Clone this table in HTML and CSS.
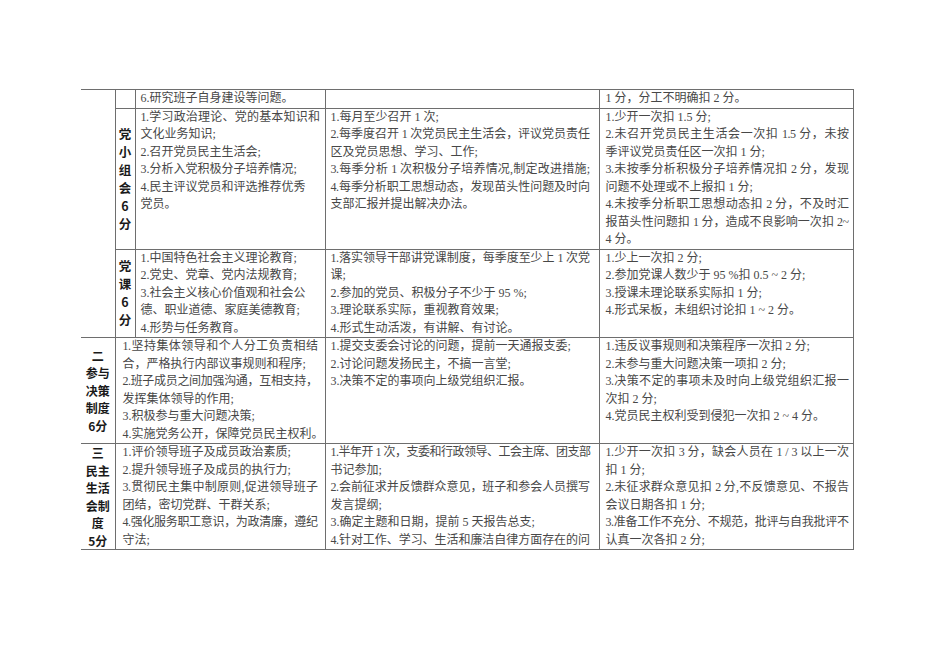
FILE: index.html
```html
<!DOCTYPE html>
<html lang="zh-CN">
<head>
<meta charset="utf-8">
<title>考核表</title>
<link rel="stylesheet" href="styles.css">
</head>
<body>
<table class="tbl">
  <colgroup>
    <col class="w1"><col class="w2"><col class="w3"><col class="w4"><col class="w5">
  </colgroup>
  <tr>
    <td class="cat" rowspan="3"></td>
    <td class="sub"></td>
    <td class="p3"><div class="ln">6.研究班子自身建设等问题。</div></td>
    <td class="p4"></td>
    <td class="p5"><div class="ln">1 分，分工不明确扣 2 分。</div></td>
  </tr>
  <tr>
    <td class="sub"><div>党</div><div>小</div><div>组</div><div>会</div><div>6</div><div>分</div></td>
    <td class="p3">
      <div class="ln f">1.学习政治理论、党的基本知识和</div>
      <div class="ln">文化业务知识;</div>
      <div class="ln">2.召开党员民主生活会;</div>
      <div class="ln">3.分析入党积极分子培养情况;</div>
      <div class="ln">4.民主评议党员和评选推荐优秀</div>
      <div class="ln">党员。</div>
    </td>
    <td class="p4">
      <div class="ln">1.每月至少召开 1 次;</div>
      <div class="ln f">2.每季度召开 1 次党员民主生活会，评议党员责任</div>
      <div class="ln">区及党员思想、学习、工作;</div>
      <div class="ln f">3.每季分析 1 次积极分子培养情况,制定改进措施;</div>
      <div class="ln f">4.每季分析职工思想动态，发现苗头性问题及时向</div>
      <div class="ln">支部汇报并提出解决办法。</div>
    </td>
    <td class="p5">
      <div class="ln">1.少开一次扣 1.5 分;</div>
      <div class="ln f">2.未召开党员民主生活会一次扣 1.5 分，未按</div>
      <div class="ln">季评议党员责任区一次扣 1 分;</div>
      <div class="ln f">3.未按季分析积极分子培养情况扣 2 分，发现</div>
      <div class="ln">问题不处理或不上报扣 1 分;</div>
      <div class="ln f">4.未按季分析职工思想动态扣 2 分，不及时汇</div>
      <div class="ln f">报苗头性问题扣 1 分，造成不良影响一次扣 2~</div>
      <div class="ln">4 分。</div>
    </td>
  </tr>
  <tr>
    <td class="sub"><div>党</div><div>课</div><div>6</div><div>分</div></td>
    <td class="p3">
      <div class="ln">1.中国特色社会主义理论教育;</div>
      <div class="ln">2.党史、党章、党内法规教育;</div>
      <div class="ln">3.社会主义核心价值观和社会公</div>
      <div class="ln">德、职业道德、家庭美德教育;</div>
      <div class="ln">4.形势与任务教育。</div>
    </td>
    <td class="p4">
      <div class="ln f">1.落实领导干部讲党课制度，每季度至少上 1 次党</div>
      <div class="ln">课;</div>
      <div class="ln">2.参加的党员、积极分子不少于 95 %;</div>
      <div class="ln">3.理论联系实际，重视教育效果;</div>
      <div class="ln">4.形式生动活泼，有讲解、有讨论。</div>
    </td>
    <td class="p5">
      <div class="ln">1.少上一次扣 2 分;</div>
      <div class="ln">2.参加党课人数少于 95 %扣 0.5 ~ 2 分;</div>
      <div class="ln">3.授课未理论联系实际扣 1 分;</div>
      <div class="ln">4.形式呆板，未组织讨论扣 1 ~ 2 分。</div>
    </td>
  </tr>
  <tr>
    <td class="cat"><div>二</div><div>参与</div><div>决策</div><div>制度</div><div>6分</div></td>
    <td class="pm" colspan="2">
      <div class="ln f">1.坚持集体领导和个人分工负责相结</div>
      <div class="ln">合，严格执行内部议事规则和程序;</div>
      <div class="ln f">2.班子成员之间加强沟通，互相支持，</div>
      <div class="ln">发挥集体领导的作用;</div>
      <div class="ln">3.积极参与重大问题决策;</div>
      <div class="ln">4.实施党务公开，保障党员民主权利。</div>
    </td>
    <td class="p4">
      <div class="ln">1.提交支委会讨论的问题，提前一天通报支委;</div>
      <div class="ln">2.讨论问题发扬民主，不搞一言堂;</div>
      <div class="ln">3.决策不定的事项向上级党组织汇报。</div>
    </td>
    <td class="p5">
      <div class="ln">1.违反议事规则和决策程序一次扣 2 分;</div>
      <div class="ln">2.未参与重大问题决策一项扣 2 分;</div>
      <div class="ln f">3.决策不定的事项未及时向上级党组织汇报一</div>
      <div class="ln">次扣 2 分;</div>
      <div class="ln">4.党员民主权利受到侵犯一次扣 2 ~ 4 分。</div>
    </td>
  </tr>
  <tr>
    <td class="cat"><div>三</div><div>民主</div><div>生活</div><div>会制</div><div>度</div><div>5分</div></td>
    <td class="pm" colspan="2">
      <div class="ln">1.评价领导班子及成员政治素质;</div>
      <div class="ln">2.提升领导班子及成员的执行力;</div>
      <div class="ln f">3.贯彻民主集中制原则,促进领导班子</div>
      <div class="ln">团结，密切党群、干群关系;</div>
      <div class="ln f">4.强化服务职工意识，为政清廉，遵纪</div>
      <div class="ln">守法;</div>
    </td>
    <td class="p4">
      <div class="ln f">1.半年开 1 次，支委和行政领导、工会主席、团支部</div>
      <div class="ln">书记参加;</div>
      <div class="ln f">2.会前征求并反馈群众意见，班子和参会人员撰写</div>
      <div class="ln">发言提纲;</div>
      <div class="ln">3.确定主题和日期，提前 5 天报告总支;</div>
      <div class="ln f">4.针对工作、学习、生活和廉洁自律方面存在的问</div>
    </td>
    <td class="p5">
      <div class="ln f">1.少开一次扣 3 分，缺会人员在 1 / 3 以上一次</div>
      <div class="ln">扣 1 分;</div>
      <div class="ln f">2.未征求群众意见扣 2 分,不反馈意见、不报告</div>
      <div class="ln">会议日期各扣 1 分;</div>
      <div class="ln f">3.准备工作不充分、不规范，批评与自我批评不</div>
      <div class="ln">认真一次各扣 2 分;</div>
    </td>
  </tr>
</table>
</body>
</html>
```
FILE: styles.css
```css
html, body {
  margin: 0;
  padding: 0;
  background: #ffffff;
}

.tbl {
  border-collapse: collapse;
  table-layout: fixed;
  width: 772px;
  margin: 89px 0 0 81px;
  font-family: "Liberation Serif", "Noto Sans CJK SC", serif;
  font-size: 12px;
  color: #474747;
}

.w1 { width: 34px; }
.w2 { width: 20px; }
.w3 { width: 190px; }
.w4 { width: 274px; }
.w5 { width: 254px; }

.tbl td {
  border: 1px solid #6e6e6e;
  padding: 0;
  vertical-align: top;
  line-height: 17.5px;
}

.tbl td.cat {
  border-left: none;
  vertical-align: middle;
  text-align: center;
  font-family: "Noto Sans CJK SC", sans-serif;
  font-weight: 700;
  font-size: 12px;
  line-height: 17.5px;
  color: #1a1a1a;
}

.tbl td.sub {
  vertical-align: middle;
  text-align: center;
  font-family: "Noto Sans CJK SC", sans-serif;
  font-weight: 700;
  font-size: 12.5px;
  line-height: 18px;
  color: #1a1a1a;
}

.p3 { padding: 0 5px 0 5px !important; }
.p4 { padding: 0 9px 0 5px !important; }
.p5 { padding: 0 4px 0 6px !important; }
.pm { padding: 0 7px 0 7px !important; }

.ln {
  display: block;
  white-space: nowrap;
}

.f {
  text-align: justify;
  text-align-last: justify;
  letter-spacing: -0.5px;
}
```
